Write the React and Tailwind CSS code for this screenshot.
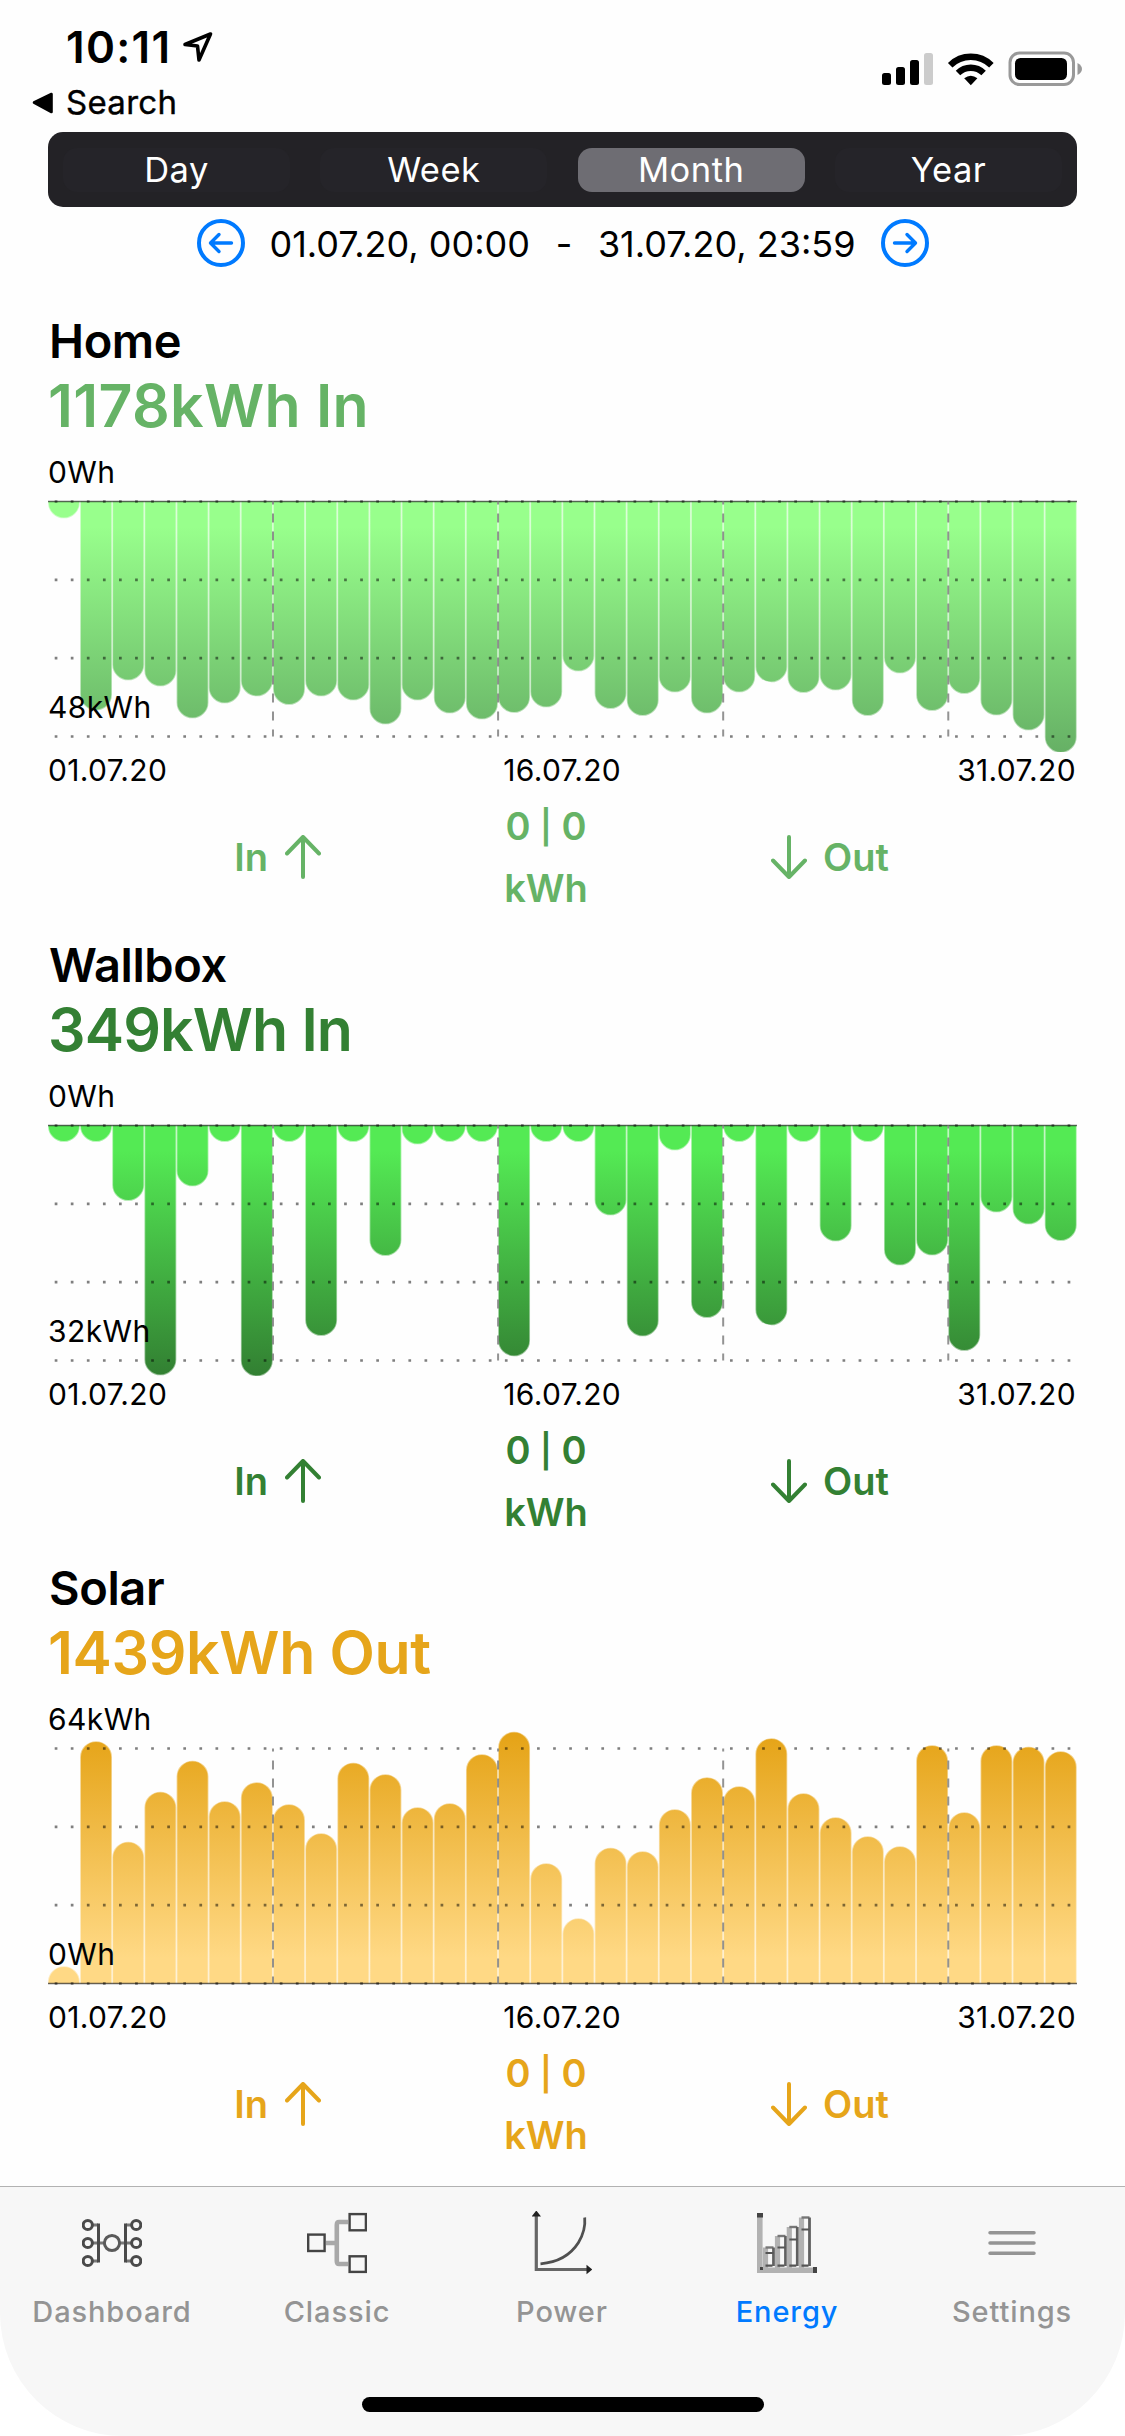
import React, { useState } from "react";

const RANGES = ["Day", "Week", "Month", "Year"];

// bar lengths in px, one per day
const HOME = [
  16, 208, 178, 184, 216, 201, 194, 202.5, 194, 198, 222, 198, 211, 217, 210.5, 205,
  169, 206.5, 213.5, 190, 211, 190, 180, 190.5, 188, 213.5, 171, 208.5, 191.5, 213, 228, 250.5,
];
const WALLBOX = [
  15.5, 15.5, 74.5, 249, 60, 15.5, 250, 15.5, 209.5, 15.5, 129.5, 18, 15.5, 15.5, 230, 15.5,
  15.5, 89, 210, 24, 191.5, 15.5, 199, 15.5, 115, 15.5, 139, 129, 224.5, 86, 98, 114.5,
];
const SOLAR = [
  16.5, 241.5, 141, 191, 222, 181.5, 200.5, 178.5, 149.5, 220, 208.5, 175.5, 179.5, 228.5, 251, 119.5,
  64.5, 135, 131.5, 173.5, 205.5, 196.5, 244.5, 189.5, 165.5, 146.5, 136.5, 237.5, 170.5, 237.5, 236, 231.5,
];

const CHART_W = 1029;
const STEP = CHART_W / 32;
const BAR_W = 30.2;
const TOP = 47.5;
const BOTTOM = 282.5;

function barPath(x, len, up) {
  const r = Math.min(BAR_W / 2, len);
  const base = up ? BOTTOM : TOP;
  const dir = up ? -1 : 1;
  const straight = base + dir * (len - r);
  const sweep = up ? 1 : 0;
  return `M${x} ${base}V${straight}A${BAR_W / 2} ${r} 0 0 ${sweep} ${x + BAR_W} ${straight}V${base}`;
}

function Chart({ id, values, up, from, to, topLabel, bottomLabel }) {
  const base = up ? BOTTOM : TOP;
  return (
    <div className="relative h-[298px]">
      <svg width={CHART_W} height="298" viewBox={`0 0 ${CHART_W} 298`} className="block">
        <defs>
          <linearGradient
            id={id}
            gradientUnits="userSpaceOnUse"
            x1="0"
            x2="0"
            y1={base}
            y2={up ? base - 251 : base + 251}
          >
            <stop offset="0" stopColor={from} />
            <stop offset="0.1" stopColor={from} />
            <stop offset="1" stopColor={to} />
          </linearGradient>
        </defs>
        {values.map((v, i) => (
          <path
            key={i}
            d={barPath(i * STEP + 0.8, v, up)}
            fill={`url(#${id})`}
            stroke={`url(#${id})`}
            strokeOpacity="0.5"
            strokeWidth="1.7"
          />
        ))}
        <path d={`M0 ${base}H${CHART_W}`} stroke="#000" strokeOpacity="0.6" strokeWidth="1.3" />
        {[0, 1, 2, 3].map((n) => (
          <path
            key={n}
            d={`M6.7 ${TOP + (n * (BOTTOM - TOP)) / 3}H${CHART_W}`}
            stroke="#000"
            strokeOpacity="0.5"
            strokeWidth="2.7"
            strokeDasharray={`2.7 ${STEP / 2 - 2.7}`}
          />
        ))}
        {[7, 14, 21, 28].map((n) => (
          <path
            key={n}
            d={`M${n * STEP - 0.1} ${TOP}V${BOTTOM}`}
            stroke="#808080"
            strokeOpacity="0.85"
            strokeWidth="2"
            strokeDasharray="9 9"
            strokeDashoffset="6"
          />
        ))}
      </svg>
      <div className="absolute inset-x-0 top-0 h-[271px] flex flex-col justify-between text-[30px] leading-[36px] tracking-[0.4px]">
        <span>{topLabel}</span>
        <span>{bottomLabel}</span>
      </div>
    </div>
  );
}

function Arrow({ down }) {
  return (
    <svg
      width="36"
      height="44"
      viewBox="0 0 36 44"
      fill="none"
      stroke="currentColor"
      strokeWidth="4"
      strokeLinecap="round"
      strokeLinejoin="round"
    >
      <path d={down ? "M18 2V42M2 25.5L18 42L34 25.5" : "M18 42V2M2 18.5L18 2L34 18.5"} />
    </svg>
  );
}

function Section({ title, value, color, tracking, height = "h-[624px]", children }) {
  return (
    <section className={`px-12 ${height}`}>
      <h2 className="pl-px text-[47px] leading-[57px] font-semibold tracking-[-0.4px]">{title}</h2>
      <p className={`h-[85px] text-[59px] leading-[73px] font-semibold ${tracking} ${color}`}>{value}</p>
      {children}
      <div className="pr-px flex justify-between text-[30px] leading-[36px] tracking-[0.35px]">
        <span>01.07.20</span>
        <span>16.07.20</span>
        <span>31.07.20</span>
      </div>
      <div className={`mt-[7px] h-[124px] flex items-center text-[38px] leading-[62px] font-semibold ${color}`}>
        <div className="w-[273px] flex items-center justify-end gap-[17px]">
          In <Arrow />
        </div>
        <div className="w-[450px] text-center">
          0 <span className="text-[33px] align-[1px] leading-none">|</span> 0<br />kWh
        </div>
        <div className="flex items-center gap-4">
          <Arrow down /> Out
        </div>
      </div>
    </section>
  );
}

function CircleArrow({ right }) {
  return (
    <svg
      width="48"
      height="48"
      viewBox="0 0 48 48"
      fill="none"
      stroke="#007aff"
      strokeWidth="4"
      strokeLinecap="round"
      strokeLinejoin="round"
    >
      <circle cx="24" cy="24" r="22" />
      <path strokeWidth="3.4" d={right ? "M13.5 24H34.5M26 15.5L34.5 24L26 32.5" : "M34.5 24H13.5M22 15.5L13.5 24L22 32.5"} />
    </svg>
  );
}

function StatusBar() {
  return (
    <div className="h-[132px] flex justify-between">
      <div className="pt-[21px]">
        <div className="pl-[66px] h-[52px] flex items-center text-[44px] leading-[52px] font-semibold">
          <span className="w-[116px] tracking-[1.3px]">10:11</span>
          <svg width="31" height="32" viewBox="0 0 31 32" fill="none" stroke="#000" strokeWidth="3.6" strokeLinejoin="round">
            <path d="M28.5 3L3 13.5L15.5 15L17 29Z" />
          </svg>
        </div>
        <div className="pl-8 h-[60px] flex items-center gap-[12px] text-[33px]">
          <svg width="22" height="22" viewBox="0 0 22 22">
            <path d="M2 10.5L19.5 2V20Z" fill="#000" stroke="#000" strokeWidth="2.6" strokeLinejoin="round" />
          </svg>
          <span className="tracking-[0.3px] [-webkit-text-stroke:0.4px_#000]">Search</span>
        </div>
      </div>
      <div className="mt-[50px] mr-[42px] h-9 flex items-center">
        <svg width="202" height="36" viewBox="881 50 202 36">
          <rect x="882" y="73" width="9" height="12" rx="2.5" />
          <rect x="896" y="67" width="9" height="18" rx="2.5" />
          <rect x="910" y="60" width="9" height="25" rx="2.5" />
          <rect x="924" y="53" width="9" height="32" rx="2.5" fill="#ccc" />
          <path d="M970.8 85.2L964.2 78.3Q970.8 73 977.4 78.3Z" />
          <g fill="none" stroke="#000" strokeWidth="6.4">
            <path d="M950.2 65.2A29.3 29.3 0 0 1 991.4 65.2" />
            <path d="M958 73A18.3 18.3 0 0 1 983.6 73" />
          </g>
          <rect x="1010" y="53" width="63.5" height="31.5" rx="9.5" fill="none" stroke="#999" strokeWidth="3" />
          <rect x="1015" y="58" width="52" height="22" rx="5.5" />
          <path d="M1077.5 63Q1082 65.5 1082 69Q1082 72.5 1077.5 75Z" fill="#999" />
        </svg>
      </div>
    </div>
  );
}

function DashboardIcon() {
  return (
    <svg width="60" height="62" viewBox="82 2213 60 62" fill="none" stroke="#4a4a4a" strokeWidth="3">
      <path
        stroke="#777"
        d="M93 2226H98M93 2262H98M131 2226H126M131 2262H126M93 2244H104M120 2244H131"
      />
      {[2226, 2244, 2262].map((y) => (
        <g key={y}>
          <circle cx="87.8" cy={y} r="4.6" />
          <circle cx="136.2" cy={y} r="4.6" />
        </g>
      ))}
      <circle cx="112" cy="2244" r="7.6" stroke="#5a5a5a" />
      <path d="M98.5 2224.5V2263.5M125.5 2224.5V2263.5" />
    </svg>
  );
}

function ClassicIcon() {
  return (
    <svg width="60" height="62" viewBox="307 2213 60 62" fill="none" stroke="#444" strokeWidth="2.4">
      <path stroke="#a8a8a8" strokeWidth="4.6" d="M326 2244H336.8M348 2223H339Q336.8 2223 336.8 2226V2262Q336.8 2265 339 2265H348" />
      <rect x="308.2" y="2235.6" width="16.4" height="16.4" />
      <rect x="349.6" y="2215.1" width="16.3" height="16.2" />
      <rect x="349.6" y="2257.3" width="16.3" height="15.6" />
    </svg>
  );
}

function PowerIcon() {
  return (
    <svg width="60" height="64" viewBox="532 2212 60 64" fill="none">
      <path stroke="#666" strokeWidth="3.2" d="M536.3 2214V2270.5H590" />
      <path fill="#222" d="M536.3 2211.5L541 2217.5H531.6ZM592.3 2270.5L586.5 2275.3V2265.7Z" />
      <path stroke="#505050" strokeWidth="2.8" d="M540.5 2264.8C556 2263.5 570 2257 578.5 2243.5C583 2236 585.5 2227 584.7 2218.5" />
    </svg>
  );
}

function EnergyIcon() {
  const bars = [
    [764.5, 2248.5, 2254],
    [776.5, 2237, 2248.5],
    [788.3, 2228, 2240.5],
    [800.5, 2218.5, 2230.5],
  ];
  return (
    <svg width="60" height="62" viewBox="757 2213 60 62" fill="none">
      <path stroke="#b2b2b2" strokeWidth="5.6" d="M759.8 2214V2271.2H817" />
      <path fill="#444" d="M757 2214H763V2218.5H757ZM813 2268H817V2274H813ZM760 2268H763V2271H760Z" />
      {bars.map(([x, top, mid]) => (
        <g key={x}>
          <path stroke="#b2b2b2" strokeWidth="5.2" d={`M${x + 1} 2270V${top}`} />
          <path stroke="#777" strokeWidth="2.4" d={`M${x + 1} ${top}H${x + 9}`} />
          <path stroke="#606060" strokeWidth="2.8" d={`M${x + 9} ${top}V2267`} />
          <path stroke="#555" strokeWidth="2.2" d={`M${x + 1} ${mid}H${x + 9}M${x + 1} 2266.7H${x + 8}`} />
        </g>
      ))}
    </svg>
  );
}

function SettingsIcon() {
  return (
    <svg width="48" height="62" viewBox="0 0 48 62" stroke="#949494" strokeWidth="3.5" strokeLinecap="round">
      <path d="M2 20.7H46M2 31H46M2 41.2H46" />
    </svg>
  );
}

const TABS = [
  { name: "Dashboard", Icon: DashboardIcon },
  { name: "Classic", Icon: ClassicIcon },
  { name: "Power", Icon: PowerIcon },
  { name: "Energy", Icon: EnergyIcon },
  { name: "Settings", Icon: SettingsIcon },
];

export default function App() {
  const [range, setRange] = useState("Month");
  const [tab, setTab] = useState("Energy");

  return (
    <div className="w-[1125px] h-[2436px] flex flex-col overflow-hidden bg-[#fefefe] text-black font-['Inter',sans-serif]">
      <StatusBar />

      <div className="mx-12 h-[75px] shrink-0 px-[15px] flex items-center justify-between rounded-[15px] bg-[#232226]">
        {RANGES.map((r) => (
          <button
            key={r}
            onClick={() => setRange(r)}
            className={`w-[227px] h-[44px] rounded-[14px] text-[34.5px] leading-[44px] text-white tracking-[0.5px] ${
              r === range ? "bg-[#6e6d73]" : "bg-[#252429]"
            }`}
          >
            {r}
          </button>
        ))}
      </div>

      <div className="h-[105px] shrink-0 pt-3 flex items-start justify-center">
        <CircleArrow />
        <div className="w-[636px] pt-px flex items-center justify-between px-[25px] text-[36px] leading-[48px] whitespace-nowrap">
          <span>01.07.20, 00:00</span>
          <span>-</span>
          <span>31.07.20, 23:59</span>
        </div>
        <CircleArrow right />
      </div>

      <Section title="Home" value="1178kWh In" color="text-[#66b366]" tracking="tracking-[0.3px]">
        <Chart id="home" values={HOME} from="#98ff8c" to="#66b065" topLabel="0Wh" bottomLabel="48kWh" />
      </Section>
      <Section
        title="Wallbox"
        value="349kWh In"
        color="text-[#338033]"
        tracking="tracking-[-0.85px]"
        height="h-[623px]"
      >
        <Chart id="wallbox" values={WALLBOX} from="#54ea54" to="#327f32" topLabel="0Wh" bottomLabel="32kWh" />
      </Section>
      <Section title="Solar" value="1439kWh Out" color="text-[#e6a51a]" tracking="tracking-[-0.35px]">
        <Chart id="solar" values={SOLAR} up from="#ffd985" to="#e5a316" topLabel="64kWh" bottomLabel="0Wh" />
      </Section>

      <nav className="mt-[3px] h-[250px] shrink-0 bg-white">
        <div className="h-[250px] flex flex-col items-center justify-between rounded-b-[123px] border-t border-[#b2b2b2] bg-[#f7f7f7]">
          <div className="w-full pt-6 flex">
            {TABS.map(({ name, Icon }) => (
              <button
                key={name}
                onClick={() => setTab(name)}
                className={`w-[225px] pr-px flex flex-col items-center text-[29px] font-medium tracking-[0.9px] ${
                  name === tab ? "text-[#007aff]" : "text-[#949494]"
                }`}
              >
                <span className="h-[64px] flex items-center">
                  <Icon />
                </span>
                <span className="mt-[17px] leading-[40px]">{name}</span>
              </button>
            ))}
          </div>
          <div className="mb-6 w-[402px] h-[15px] rounded-full bg-black" />
        </div>
      </nav>
    </div>
  );
}
